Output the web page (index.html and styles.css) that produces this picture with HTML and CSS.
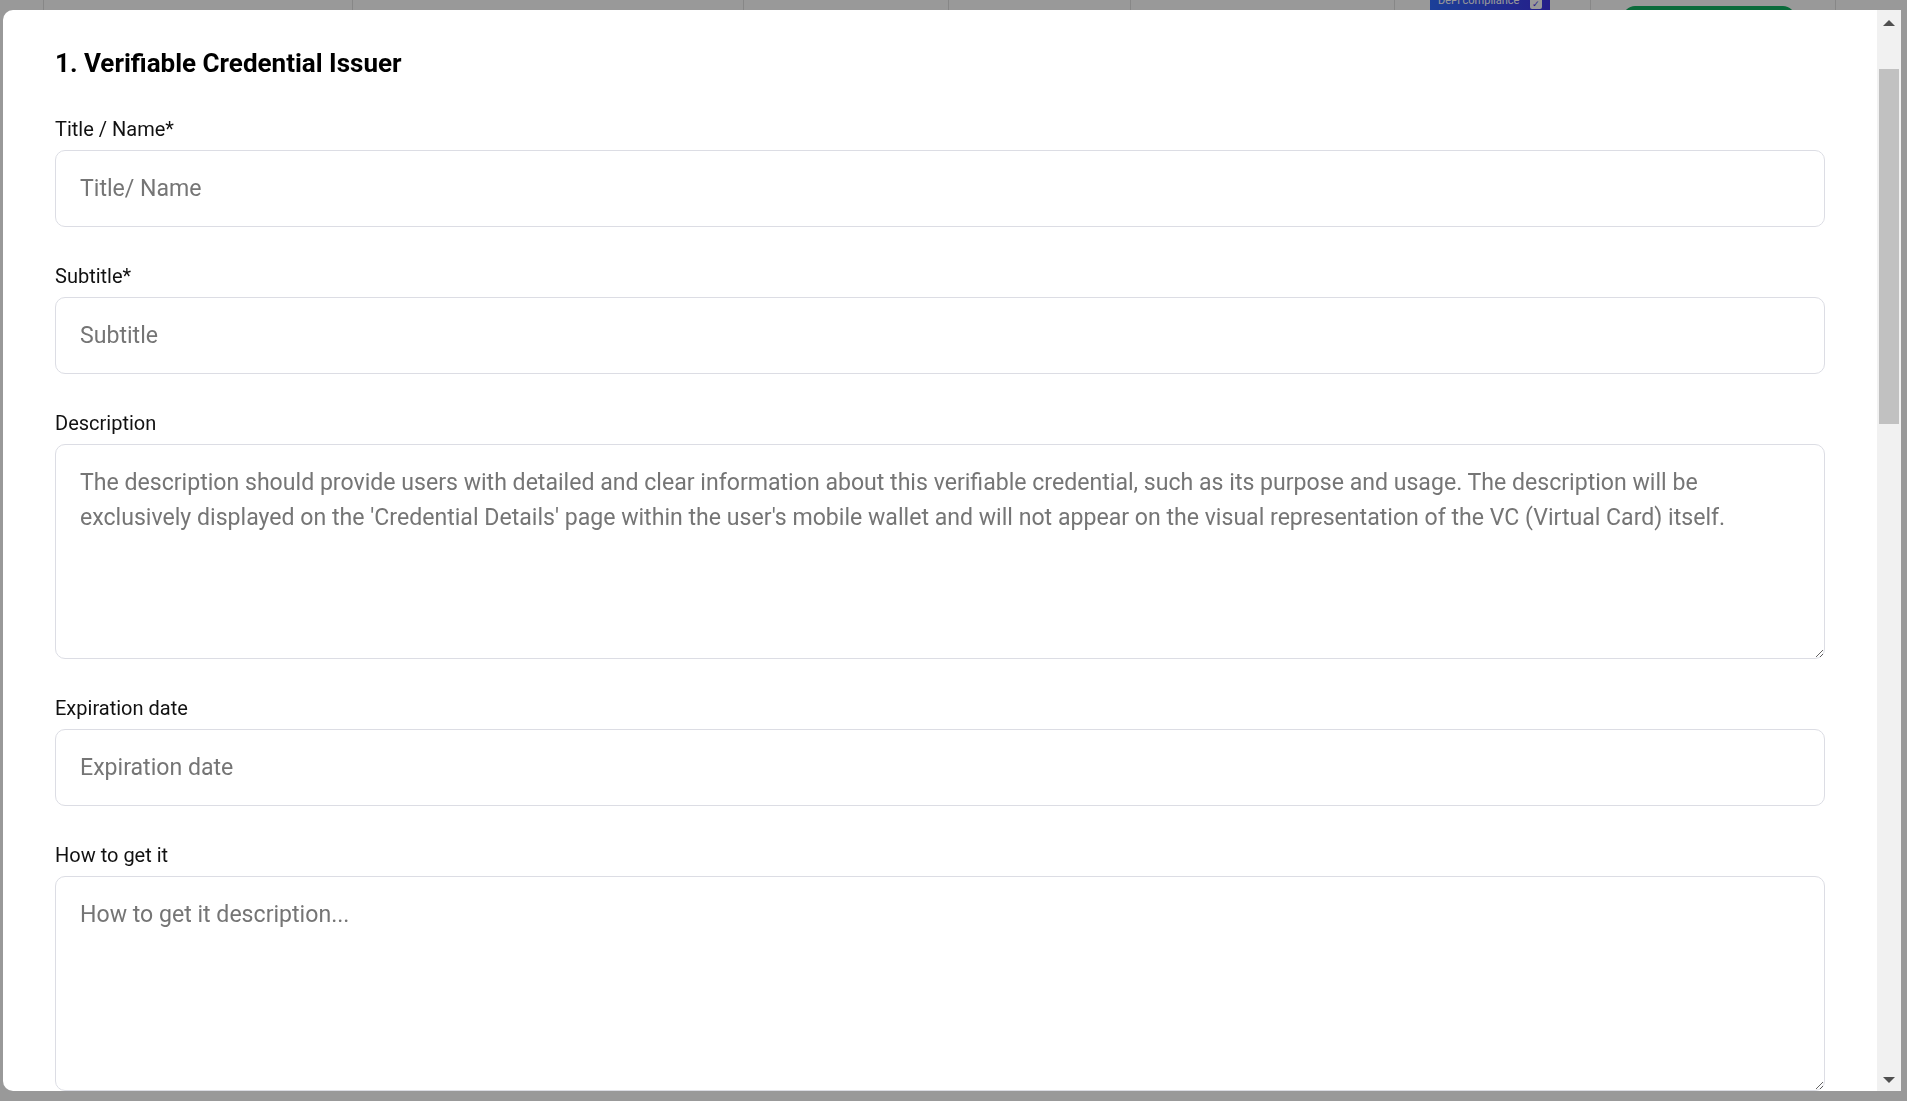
FILE: index.html
```html
<!DOCTYPE html>
<html lang="en">
<head>
<meta charset="utf-8">
<title>Verifiable Credential Issuer</title>
<link rel="stylesheet" href="styles.css">
</head>
<body>
<div class="page">
  <div class="table-head">
    <div class="cell"></div>
    <div class="cell"></div>
    <div class="cell"></div>
    <div class="cell"></div>
    <div class="cell"></div>
    <div class="cell"></div>
    <div class="cell cell-card">
      <div class="vc-card">
        <span class="vc-card-text">DeFi compliance</span>
        <span class="vc-check">&#10003;</span>
      </div>
    </div>
    <div class="cell cell-btn"><div class="green-btn"></div></div>
    <div class="cell"></div>
  </div>
</div>

<div class="overlay">
  <div class="modal">
    <div class="modal-scroll">
      <section class="section">
        <h2 class="section-title">1. Verifiable Credential Issuer</h2>

        <div class="field">
          <label class="field-label" for="f-title">Title / Name*</label>
          <input class="control" id="f-title" type="text" placeholder="Title/ Name">
        </div>

        <div class="field">
          <label class="field-label" for="f-subtitle">Subtitle*</label>
          <input class="control" id="f-subtitle" type="text" placeholder="Subtitle">
        </div>

        <div class="field">
          <label class="field-label" for="f-desc">Description</label>
          <textarea class="control control-area" id="f-desc" placeholder="The description should provide users with detailed and clear information about this verifiable credential, such as its purpose and usage. The description will be exclusively displayed on the 'Credential Details' page within the user's mobile wallet and will not appear on the visual representation of the VC (Virtual Card) itself."></textarea>
        </div>

        <div class="field">
          <label class="field-label" for="f-exp">Expiration date</label>
          <input class="control" id="f-exp" type="text" placeholder="Expiration date">
        </div>

        <div class="field">
          <label class="field-label" for="f-how">How to get it</label>
          <textarea class="control control-area" id="f-how" placeholder="How to get it description..."></textarea>
        </div>
      </section>
    </div>

    <div class="scrollbar" aria-hidden="true">
      <div class="sb-btn">
        <svg width="24" height="24" viewBox="0 0 24 24"><path d="M6 16H18L12 10Z" fill="#505050"/></svg>
      </div>
      <div class="sb-track"><div class="sb-thumb"></div></div>
      <div class="sb-btn">
        <svg width="24" height="24" viewBox="0 0 24 24"><path d="M6 10H18L12 16Z" fill="#505050"/></svg>
      </div>
    </div>
  </div>
</div>
</body>
</html>
```

FILE: styles.css
```css
* { box-sizing: border-box; }

html, body {
  margin: 0;
  padding: 0;
  height: 100%;
  overflow: hidden;
}

body {
  background: #ffffff;
  font-family: Roboto, "Liberation Sans", Arial, sans-serif;
  color: #111111;
}

/* background page (dimmed by overlay) */
.page {
  height: 100%;
}

.table-head {
  display: grid;
  grid-template-columns: 44px 309px 391px 205px 182px 264px 196px 245px 1fr;
  height: 40px;
}

.cell {
  border-right: 1px solid #e2e2e2;
  height: 40px;
}

.cell:last-child { border-right: none; }

.cell-card {
  padding-left: 35px;
}

.vc-card {
  width: 120px;
  height: 24px;
  background: linear-gradient(90deg, #2f6bff 0%, #3e33e6 100%);
  display: flex;
  align-items: flex-start;
  justify-content: space-between;
  padding: 0 8px;
  overflow: hidden;
}

.vc-card-text {
  color: #ffffff;
  font-size: 11px;
  line-height: 8px;
  margin-top: -3px;
}

.vc-check {
  width: 12px;
  height: 9px;
  background: #ffffff;
  color: #3e33e6;
  font-size: 9px;
  line-height: 8px;
  text-align: center;
  border-radius: 0 0 2px 2px;
}

.cell-btn {
  padding: 6px 0 0 32px;
}

.green-btn {
  width: 172px;
  height: 30px;
  background: #12b261;
  border-radius: 12px;
}

/* overlay + modal */
.overlay {
  position: fixed;
  inset: 0;
  background: rgba(0, 0, 0, 0.4);
  padding: 10px 6px 10px 3px;
  display: flex;
}

.modal {
  flex: 1;
  height: 1081px;
  display: flex;
  background: #ffffff;
  border-radius: 10px 0 0 10px;
  overflow: hidden;
}

.modal-scroll {
  flex: 1;
  min-width: 0;
  overflow: hidden;
  padding: 0 52px;
}

/* drawn scrollbar */
.scrollbar {
  width: 24px;
  flex: none;
  display: flex;
  flex-direction: column;
  background: #f1f1f1;
}

.sb-btn {
  height: 24px;
  flex: none;
}

.sb-btn svg { display: block; }

.sb-track {
  flex: 1;
  padding: 35px 2px 0;
}

.sb-thumb {
  height: 355px;
  background: #c1c1c1;
}

/* form */
.section {
  padding-top: 38px;
}

.section-title {
  margin: 0 0 38px;
  font-size: 26px;
  line-height: 31.2px;
  font-weight: 700;
  color: #000000;
}

.field {
  display: flex;
  flex-direction: column;
  margin-bottom: 37px;
}

.field-label {
  font-size: 20px;
  line-height: 24px;
  color: #111111;
  margin-bottom: 9px;
}

.control {
  display: block;
  width: 100%;
  height: 77px;
  padding: 0 24px;
  border: 1px solid #dcdde4;
  border-radius: 10px;
  background: #ffffff;
  font-family: Roboto, "Liberation Sans", Arial, sans-serif;
  font-size: 23.1px;
  color: #333333;
  outline: none;
}

.control::placeholder {
  color: #757575;
  opacity: 1;
}

.control-area {
  height: 215px;
  padding: 20px 24px;
  line-height: 35px;
  resize: vertical;
}
```
